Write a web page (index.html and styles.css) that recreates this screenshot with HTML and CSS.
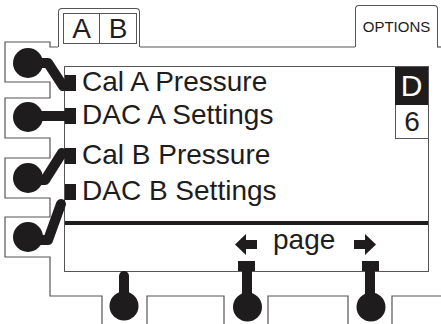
FILE: index.html
```html
<!DOCTYPE html>
<html lang="en">
<head>
<meta charset="utf-8">
<title>Panel</title>
<link rel="stylesheet" href="styles.css">
</head>
<body>
<div class="device">
  <header class="tabs">
    <div class="tab tab-ab">
      <div class="ab-box"><span class="ab-cell">A</span><span class="ab-cell ab-cell-b">B</span></div>
    </div>
    <div class="tab tab-options">OPTIONS</div>
  </header>

  <main class="screen">
    <div class="screen-top">
      <ul class="menu">
        <li class="menu-item"><span class="bullet"></span>Cal A Pressure</li>
        <li class="menu-item"><span class="bullet"></span>DAC A Settings</li>
        <li class="menu-item"><span class="bullet"></span>Cal B Pressure</li>
        <li class="menu-item"><span class="bullet"></span>DAC B Settings</li>
      </ul>
      <div class="indicator">
        <div class="ind-letter">D</div>
        <div class="ind-number">6</div>
      </div>
    </div>
    <div class="softkeys">
      <svg class="arrow arrow-left" width="22" height="21" viewBox="0 0 22 21"><path d="M0 10.5 L11 0 L11 6 L22 6 L22 15 L11 15 L11 21 Z"/></svg>
      <span class="page-label">page</span>
      <svg class="arrow arrow-right" width="22" height="21" viewBox="0 0 22 21"><path d="M22 10.5 L11 0 L11 6 L0 6 L0 15 L11 15 L11 21 Z"/></svg>
    </div>
  </main>

  <svg class="frame" width="441" height="324" viewBox="0 0 441 324">
    <g class="outline">
      <path d="M58 47 L50 47 L50 42 L5 42 L5 82 L50 82 L50 98 L5 98 L5 138 L50 138 L50 158 L5 158 L5 198 L50 198 L50 217 L5 217 L5 257 L50 257 L50 296 L102 296 L102 324"/>
      <path d="M140 47 L355 47"/>
      <path d="M437 47 L441 47"/>
      <path d="M147 324 L147 296 L224 296 L224 324"/>
      <path d="M268 324 L268 296 L348 296 L348 324"/>
      <path d="M392 324 L392 296 L441 296"/>
    </g>
    <g class="knob-stems">
      <polyline points="28,63 48,63 63,86"/>
      <polyline points="28,116 66,116"/>
      <polyline points="28,180 45,180 62,153"/>
      <polyline points="28,240 48,240 61,204"/>
      <polyline points="124,276 124,300"/>
    </g>
    <g class="knob-stems flat">
      <polyline points="247,270 247,300"/>
      <polyline points="370,270 370,300"/>
    </g>
    <g class="knobs">
      <circle cx="28" cy="63" r="15"/>
      <circle cx="28" cy="117" r="15"/>
      <circle cx="28" cy="178" r="15"/>
      <circle cx="28" cy="237" r="15"/>
      <circle cx="124" cy="306" r="14.5"/>
      <circle cx="247.5" cy="307" r="14.5"/>
      <circle cx="371" cy="307" r="14.5"/>
      <rect x="238" y="261" width="17" height="10"/>
      <rect x="362" y="261" width="17" height="10"/>
    </g>
  </svg>
</div>
</body>
</html>
```

FILE: styles.css
```css
* { box-sizing: border-box; }

html, body {
  margin: 0;
  padding: 0;
  background: #ffffff;
}

.device {
  position: relative;
  width: 441px;
  height: 324px;
  overflow: hidden;
  font-family: "Liberation Sans", Arial, sans-serif;
  color: #1e1c1d;
}

/* ---------- top tabs ---------- */
.tabs {
  display: flex;
  align-items: flex-start;
  height: 47px;
}

.tab {
  border: 1px solid #555;
  border-bottom: none;
  border-radius: 4px 4px 0 0;
}

.tab-ab {
  margin-left: 58px;
  margin-top: 8px;
  width: 82px;
  height: 39px;
  padding: 4px 0 0 4px;
}

.ab-box {
  display: flex;
  width: 74px;
  height: 31px;
  border: 1px solid #555;
}

.ab-cell {
  width: 35px;
  font-size: 28px;
  line-height: 29px;
  text-align: center;
}

.ab-cell-b {
  width: 37px;
  border-left: 1px solid #555;
}

.tab-options {
  margin-left: 215px;
  margin-top: 5px;
  width: 83px;
  height: 42px;
  padding-top: 12px;
  font-size: 15px;
  line-height: 17px;
  text-align: center;
}

/* ---------- screen ---------- */
.screen {
  margin-top: 19px;
  margin-left: 64px;
  width: 365px;
  height: 206px;
  border: 1px solid #555;
  display: flex;
  flex-direction: column;
}

.screen-top {
  display: flex;
  height: 154px;
}

.menu {
  flex: 1;
  list-style: none;
  margin: 0;
  padding: 0;
}

.menu-item {
  font-size: 28px;
  line-height: 30px;
  white-space: nowrap;
}

.menu-item:nth-child(2) { margin-top: 3px; }
.menu-item:nth-child(3) { margin-top: 10px; }
.menu-item:nth-child(4) { margin-top: 6px; }

.bullet {
  display: inline-block;
  width: 11px;
  height: 16px;
  background: #1e1c1d;
  margin-right: 6px;
  vertical-align: 0;
}

.indicator {
  width: 33px;
  display: flex;
  flex-direction: column;
}

.ind-letter {
  height: 38px;
  background: #1e1c1d;
  color: #ffffff;
  font-size: 30px;
  line-height: 38px;
  text-align: center;
}

.ind-number {
  height: 34px;
  border-left: 1px solid #555;
  border-bottom: 1px solid #555;
  font-size: 28px;
  line-height: 33px;
  text-align: center;
}

.softkeys {
  flex: 1;
  border-top: 4px solid #1e1c1d;
  display: flex;
  align-items: flex-start;
}

.arrow {
  margin-top: 9px;
  fill: #1e1c1d;
}

.arrow-left { margin-left: 170px; }

.page-label {
  margin-left: 16px;
  font-size: 28px;
  line-height: 30px;
}

.arrow-right { margin-left: 19px; }

/* ---------- drawn frame & knobs ---------- */
.frame {
  position: absolute;
  left: 0;
  top: 0;
  pointer-events: none;
}

.outline path {
  fill: none;
  stroke: #555;
  stroke-width: 1.2;
}

.knob-stems polyline {
  fill: none;
  stroke: #1e1c1d;
  stroke-width: 10;
  stroke-linecap: round;
  stroke-linejoin: round;
}

.knob-stems.flat polyline {
  stroke-linecap: butt;
}

.knobs circle,
.knobs rect {
  fill: #1e1c1d;
}
```
